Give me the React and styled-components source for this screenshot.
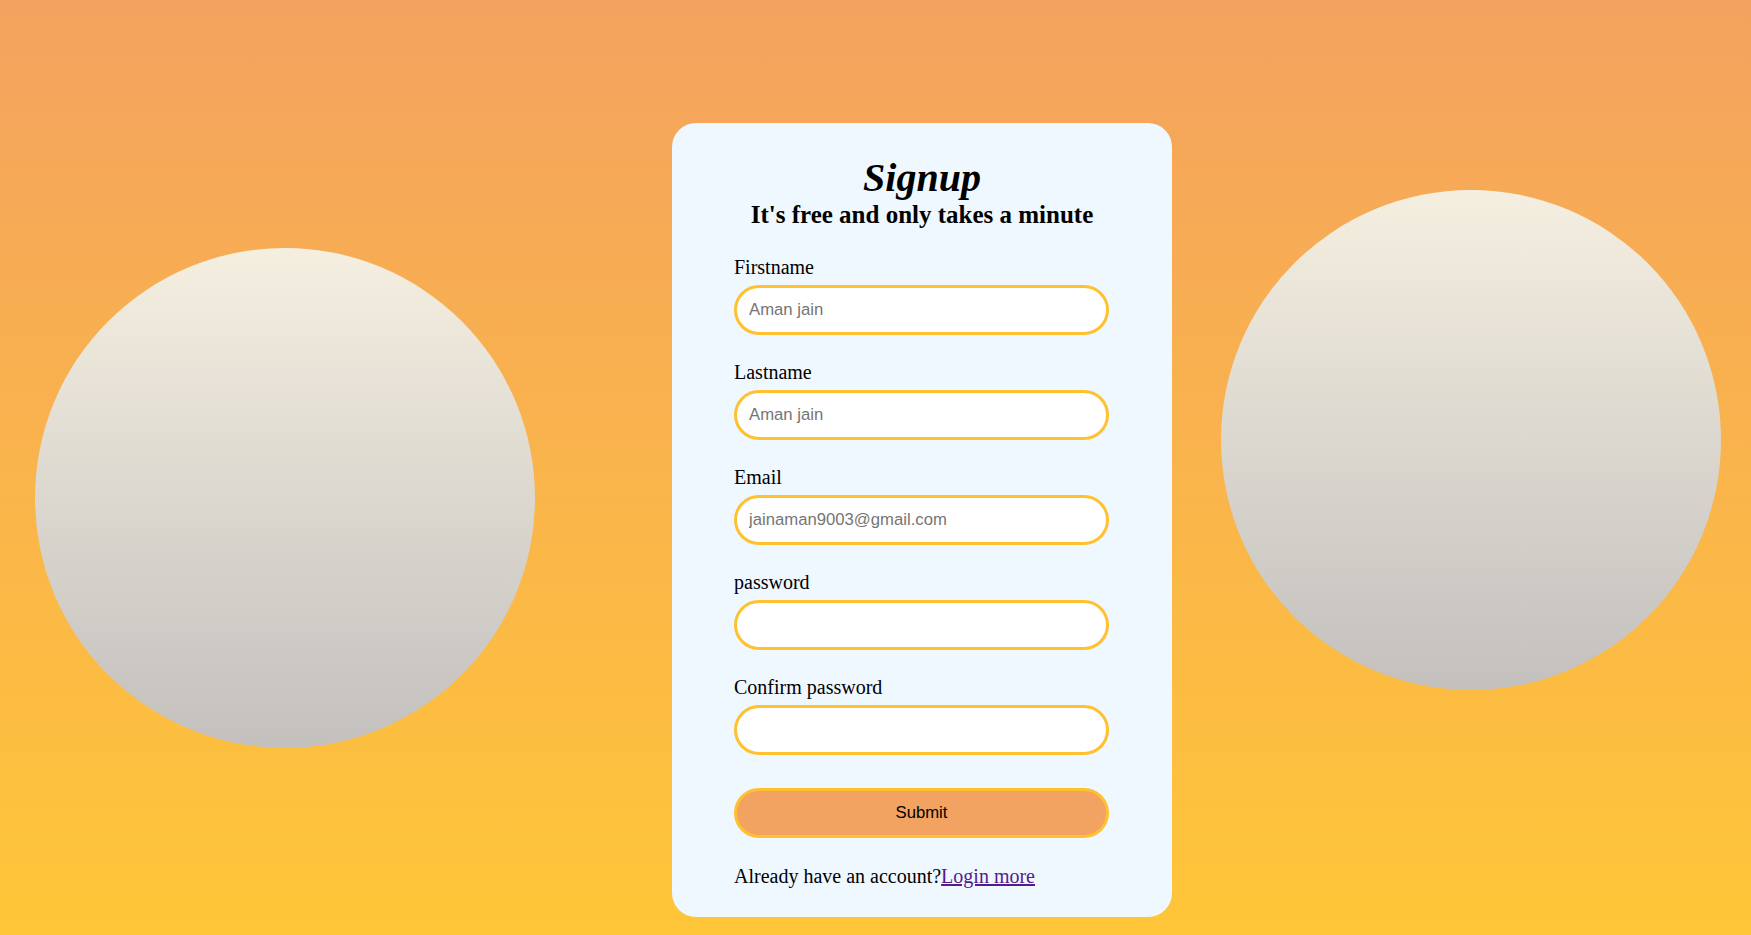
import styled, { createGlobalStyle } from "styled-components";

const GlobalStyle = createGlobalStyle`
  html, body {
    margin: 0;
    padding: 0;
  }
  body {
    font-family: "Liberation Serif", "Times New Roman", serif;
    color: #000;
  }
`;

const fields = [
  { label: "Firstname", type: "text", placeholder: "Aman jain" },
  { label: "Lastname", type: "text", placeholder: "Aman jain" },
  { label: "Email", type: "email", placeholder: "jainaman9003@gmail.com" },
  { label: "password", type: "password", placeholder: "" },
  { label: "Confirm password", type: "password", placeholder: "" },
];

export default function App() {
  return (
    <>
      <GlobalStyle />
      <Page>
        <Circle $top="248px" />
        <Card>
          <Title>Signup</Title>
          <Subtitle>It's free and only takes a minute</Subtitle>
          <Form onSubmit={(e) => e.preventDefault()}>
            {fields.map((f) => (
              <Field key={f.label}>
                <Label>{f.label}</Label>
                <Input type={f.type} placeholder={f.placeholder} />
              </Field>
            ))}
            <SubmitButton type="submit">Submit</SubmitButton>
          </Form>
          <Footer>
            Already have an account?<LoginLink href="#">Login more</LoginLink>
          </Footer>
        </Card>
        <Circle $top="190px" />
      </Page>
    </>
  );
}

const Page = styled.main`
  display: flex;
  align-items: flex-start;
  width: 1751px;
  height: 935px;
  box-sizing: border-box;
  padding-left: 35px;
  background: linear-gradient(to bottom, #f4a25f, #ffc638);
  overflow: hidden;

  & > :nth-child(2) {
    margin-left: 137px;
    margin-right: 49px;
  }
`;

const Circle = styled.div`
  flex: 0 0 auto;
  width: 500px;
  height: 500px;
  margin-top: ${(p) => p.$top};
  border-radius: 50%;
  background: linear-gradient(to bottom, #f5efe0, #c3c0be);
`;

const Card = styled.section`
  flex: 0 0 auto;
  width: 500px;
  height: 794px;
  margin-top: 123px;
  box-sizing: border-box;
  padding: 35px 62px 0;
  background: #eff7ff;
  border-radius: 24px;
  display: flex;
  flex-direction: column;
`;

const Title = styled.h1`
  margin: 0;
  font-size: 40px;
  line-height: 40px;
  font-style: italic;
  font-weight: bold;
  text-align: center;
`;

const Subtitle = styled.h2`
  margin: 4px 0 0;
  font-size: 25px;
  line-height: 25px;
  font-weight: bold;
  text-align: center;
`;

const Form = styled.form`
  display: flex;
  flex-direction: column;
  margin-top: 30px;
`;

const Field = styled.div`
  display: flex;
  flex-direction: column;
  gap: 8px;
  margin-bottom: 27px;

  &:last-of-type {
    margin-bottom: 33px;
  }
`;

const Label = styled.label`
  font-size: 20px;
  line-height: 20px;
`;

const Input = styled.input`
  width: 375px;
  height: 50px;
  box-sizing: border-box;
  padding: 0 12px;
  border: 3.75px solid #ffc12f;
  border-radius: 30px;
  background: #fff;
  font-family: "Liberation Sans", Arial, sans-serif;
  font-size: 16.7px;
  outline: none;

  &::placeholder {
    color: #757575;
  }
`;

const SubmitButton = styled.button`
  width: 375px;
  height: 50px;
  box-sizing: border-box;
  border: 3.75px solid #ffc12f;
  border-radius: 30px;
  background: #f2a261;
  font-family: "Liberation Sans", Arial, sans-serif;
  font-size: 16.7px;
  color: #000;
  cursor: pointer;
`;

const Footer = styled.p`
  margin: 28px 0 0;
  font-size: 20px;
  line-height: 20px;
`;

const LoginLink = styled.a`
  color: #551a8b;
  text-decoration: underline;
`;
